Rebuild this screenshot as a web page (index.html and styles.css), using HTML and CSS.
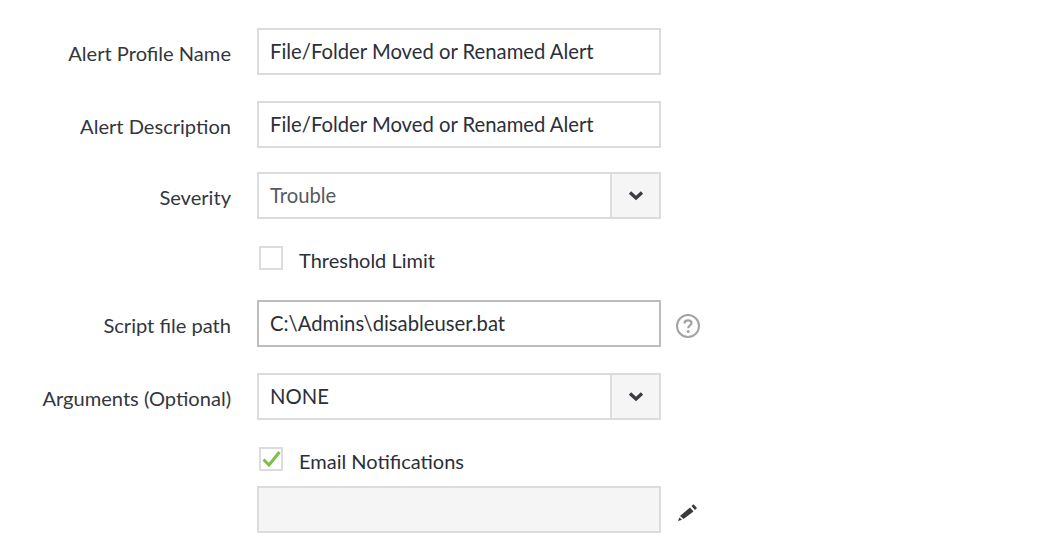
FILE: index.html
```html
<!DOCTYPE html>
<html lang="en">

<head>
    <meta charset="UTF-8">
    <title>Alert Profile</title>
    <link rel="stylesheet" href="styles.css">
</head>

<body>
    <form class="alert-form">
        <div class="form-row row-name">
            <label class="form-label">Alert Profile Name</label>
            <div class="field">File/Folder Moved or Renamed Alert</div>
        </div>

        <div class="form-row row-description">
            <label class="form-label">Alert Description</label>
            <div class="field">File/Folder Moved or Renamed Alert</div>
        </div>

        <div class="form-row row-severity">
            <label class="form-label">Severity</label>
            <div class="field select-field">
                <span class="select-value muted">Trouble</span>
                <span class="select-arrow">
                    <svg width="16" height="11" viewBox="0 0 16 11">
                        <path d="M2 2.5 L8 8 L14 2.5" fill="none" stroke="#3a3d42" stroke-width="3.4" />
                    </svg>
                </span>
            </div>
        </div>

        <div class="check-row row-threshold">
            <span class="checkbox"></span>
            <span class="check-label">Threshold Limit</span>
        </div>

        <div class="form-row row-script">
            <label class="form-label">Script file path</label>
            <div class="field field-dark">C:\Admins\disableuser.bat</div>
            <svg class="help-icon" width="26" height="26" viewBox="0 0 26 26">
                <circle cx="13" cy="13" r="11" fill="none" stroke="#a3a3a3" stroke-width="2" />
                <path d="M9.5 10.5 C9.5 8.4 11 7.4 13 7.4 C15 7.4 16.5 8.5 16.5 10.2 C16.5 12.4 13.2 12.6 13.2 15.2" fill="none" stroke="#a3a3a3" stroke-width="2.2" />
                <circle cx="13.2" cy="18.4" r="1.5" fill="#a3a3a3" />
            </svg>
        </div>

        <div class="form-row row-arguments">
            <label class="form-label">Arguments (Optional)</label>
            <div class="field select-field">
                <span class="select-value">NONE</span>
                <span class="select-arrow">
                    <svg width="16" height="11" viewBox="0 0 16 11">
                        <path d="M2 2.5 L8 8 L14 2.5" fill="none" stroke="#3a3d42" stroke-width="3.4" />
                    </svg>
                </span>
            </div>
        </div>

        <div class="check-row row-email">
            <span class="checkbox">
                <svg width="20" height="20" viewBox="0 0 20 20">
                    <path d="M2.5 10.5 L8 16 L18.5 3" fill="none" stroke="#7cc04b" stroke-width="3" />
                </svg>
            </span>
            <span class="check-label">Email Notifications</span>
        </div>

        <div class="form-row row-recipients">
            <span class="form-label"></span>
            <div class="field field-disabled"></div>
            <svg class="edit-icon" width="22" height="20" viewBox="0 0 22 20">
                <path d="M3 14 L13 5.5 L16.5 9.5 L6.5 17 Z" fill="#3a3a3a" />
                <path d="M14.5 4 L16.5 2.3 L20 6 L18 8 Z" fill="#3a3a3a" />
                <path d="M2.4 15.4 L5 17.8 L1 19 Z" fill="#3a3a3a" />
            </svg>
        </div>
    </form>
</body>

</html>
```

FILE: styles.css
```css
* {
    box-sizing: border-box;
    margin: 0;
    padding: 0;
    font-family: Lato, 'Open Sans', sans-serif;
}

body {
    width: 1039px;
    height: 544px;
    overflow: hidden;
    background-color: white;
    color: #2b2f38;
    font-size: 20px;
}

.alert-form {
    padding-top: 28px;
}

.form-row {
    display: flex;
    align-items: center;
}

.form-label {
    width: 231px;
    margin-right: 26px;
    padding-top: 3px;
    text-align: right;
    font-size: 20.1px;
    color: #33363d;
}

.field {
    display: flex;
    align-items: center;
    width: 404px;
    height: 47px;
    padding: 0 11px 1px;
    border: 2px solid #dcdcdc;
    background-color: white;
    font-size: 20.25px;
}

.field-dark {
    border-color: #bdbdbd;
}

.field-disabled {
    background-color: #f5f5f5;
}

.select-field {
    padding-right: 0;
    padding-bottom: 0;
}

.select-value {
    flex: 1;
    padding-bottom: 1px;
}

.muted {
    color: #555a60;
}

.select-arrow {
    display: flex;
    align-items: center;
    justify-content: center;
    width: 49px;
    height: 100%;
    border-left: 2px solid #dcdcdc;
    background-color: #f5f5f5;
}

.check-row {
    display: flex;
    align-items: center;
    height: 24px;
    padding-left: 259px;
}

.checkbox {
    display: flex;
    align-items: center;
    justify-content: center;
    width: 24px;
    height: 24px;
    margin-right: 16px;
    border: 2px solid #dcdcdc;
    background-color: white;
}

.check-label {
    padding-top: 3px;
    color: #2b2f38;
}

.help-icon {
    margin-left: 14px;
    margin-top: 4px;
}

.edit-icon {
    margin-left: 16px;
    margin-top: 4px;
}

.row-description {
    margin-top: 26px;
}

.row-severity {
    margin-top: 24px;
}

.row-threshold {
    margin-top: 27px;
}

.row-script {
    margin-top: 30px;
}

.row-arguments {
    margin-top: 26px;
}

.row-email {
    margin-top: 27px;
}

.row-recipients {
    margin-top: 15px;
}
```
